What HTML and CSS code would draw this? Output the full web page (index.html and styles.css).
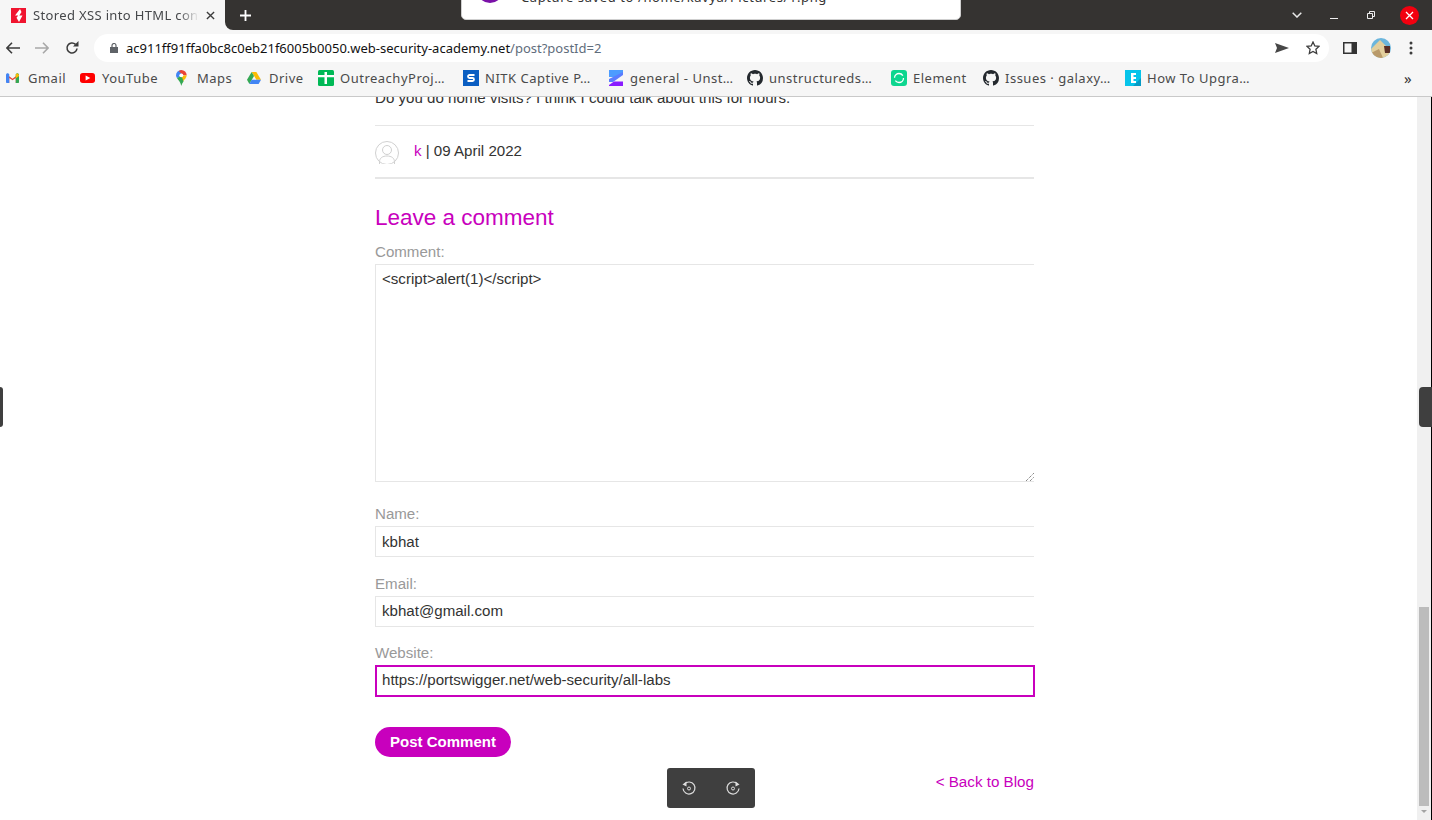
FILE: index.html
```html
<!DOCTYPE html>
<html>
    <head>
        <title>Stored XSS into HTML context</title>
        <meta charset="utf-8">
        <link rel="stylesheet" href="styles.css">
    </head>
    <body>
        <svg class="defs" width="0" height="0">
            <symbol id="github" viewBox="0 0 16 16"><path fill="#24292e" d="M8 0C3.58 0 0 3.58 0 8c0 3.54 2.29 6.53 5.47 7.59.4.07.55-.17.55-.38 0-.19-.01-.82-.01-1.49-2.01.37-2.53-.49-2.69-.94-.09-.23-.48-.94-.82-1.13-.28-.15-.68-.52-.01-.53.63-.01 1.08.58 1.23.82.72 1.21 1.87.87 2.33.66.07-.52.28-.87.51-1.07-1.78-.2-3.64-.89-3.64-3.95 0-.87.31-1.59.82-2.15-.08-.2-.36-1.02.08-2.12 0 0 .67-.21 2.2.82.64-.18 1.32-.27 2-.27.68 0 1.36.09 2 .27 1.53-1.04 2.2-.82 2.2-.82.44 1.1.16 1.92.08 2.12.51.56.82 1.27.82 2.15 0 3.07-1.87 3.75-3.65 3.95.29.25.54.73.54 1.48 0 1.07-.01 1.93-.01 2.2 0 .21.15.46.55.38A8.013 8.013 0 0016 8c0-4.42-3.58-8-8-8z"/></symbol>
        </svg>

        <div class="tabstrip">
            <div class="tab">
                <svg class="favicon" viewBox="0 0 15 15"><rect width="15" height="15" fill="#f0142f"/><path fill="#fff" d="M9 1 4 7.500h3.200L5.500 9.800 8 14l3.500-6.500H8.300L10.500 4z"/></svg>
                <span class="tab-title">Stored XSS into HTML context</span>
                <svg class="tab-close" viewBox="0 0 10 10"><path d="M1 1l8 8M9 1l-8 8" stroke="#3c3c3c" stroke-width="1.500"/></svg>
            </div>
            <div class="strip-rest">
                <svg class="new-tab" viewBox="0 0 12 12"><path d="M6 0v12M0 6h12" stroke="#fff" stroke-width="2"/></svg>
                <div class="window-btns">
                    <svg class="win-chevron" viewBox="0 0 10 6"><path d="M.7.7 5 5l4.300-4.300" fill="none" stroke="#e8e8e8" stroke-width="1.500"/></svg>
                    <svg class="win-min" viewBox="0 0 8 2"><rect width="8" height="1" y="1" fill="#eee"/></svg>
                    <svg class="win-max" viewBox="0 0 8 8"><path d="M.5 2.500h5v5h-5zM2.500 2V.5h5v5H6" fill="none" stroke="#eee"/></svg>
                    <svg class="win-close" viewBox="0 0 19 19"><circle cx="9.500" cy="9.500" r="9.500" fill="#f2000f"/><path d="M6 6l7 7M13 6l-7 7" stroke="#fff" stroke-width="1.300"/></svg>
                </div>
            </div>
        </div>

        <div class="toolbar">
            <svg class="nav-back" viewBox="0 0 14 12"><path d="M6 .7.9 6 6 11.300M1 6h13" fill="none" stroke="#3c3c3c" stroke-width="1.600"/></svg>
            <svg class="nav-fwd" viewBox="0 0 14 12"><path d="M8 .7 13.100 6 8 11.300M13 6H0" fill="none" stroke="#a8a8a8" stroke-width="1.600"/></svg>
            <svg class="nav-reload" viewBox="0 0 14 14"><path d="M12 7.500A5 5 0 1 1 10.500 3.400" fill="none" stroke="#3c3c3c" stroke-width="1.600"/><path d="M13.500 0v5.500H8z" fill="#3c3c3c"/></svg>
            <div class="omnibox">
                <svg class="lock" viewBox="0 0 8 10"><path d="M0 4h8v6H0z" fill="#5f6368"/><path d="M2 4.500V2.500a2 2 0 0 1 4 0v2" fill="none" stroke="#5f6368" stroke-width="1.200"/></svg>
                <span class="url"><b>ac911ff91ffa0bc8c0eb21f6005b0050.web-security-academy.net</b>/post?postId=2</span>
                <svg class="send" viewBox="0 0 14 10"><path d="M0 0 14 5 0 10l2-5z" fill="#474747"/></svg>
                <svg class="star" viewBox="0 0 14 14"><path d="M7 1l1.800 3.900 4.200.5-3.100 2.900.8 4.200L7 10.400l-3.700 2.100.8-4.200L1 5.400l4.200-.5z" fill="none" stroke="#3c3c3c" stroke-width="1.300"/></svg>
            </div>
            <svg class="side-panel" viewBox="0 0 14 12"><path d="M0 0h14v12H0zM1.500 1.500v9h7v-9z" fill="#333" fill-rule="evenodd"/></svg>
            <svg class="profile" viewBox="0 0 20 20"><defs><clipPath id="pf"><circle cx="10" cy="10" r="10"/></clipPath></defs><g clip-path="url(#pf)"><rect width="20" height="20" fill="#6cb6dc"/><path d="M0 11 9 2l9 9v9H0z" fill="#e3cf9c"/><path d="M0 15l8-4 4 9H0z" fill="#b99a6a"/><path d="M13 8h6v7h-5z" fill="#5a2f26"/></g></svg>
            <svg class="menu" viewBox="0 0 4 14"><circle cx="2" cy="2" r="1.500" fill="#3c3c3c"/><circle cx="2" cy="7" r="1.500" fill="#3c3c3c"/><circle cx="2" cy="12" r="1.500" fill="#3c3c3c"/></svg>
        </div>

        <div class="bookmarks">
            <a class="bm">
                <svg class="ic-gmail" viewBox="0 0 16 13" preserveAspectRatio="none"><path d="M1 13V2l7 5.500L15 2v11h-3V6.500L8 9.500 4 6.500V13z" fill="#ea4335"/><path d="M0 2.500C0 .5 2 0 3 .8L4 1.600V13H1.200C.5 13 0 12.500 0 12z" fill="#4285f4"/><path d="M16 2.500c0-2-2-2.500-3-1.700l-1 .8V13h2.800c.7 0 1.200-.5 1.200-1z" fill="#34a853"/><path d="M12 1.600 14 .4 16 2.500V4l-4 3z" fill="#fbbc04"/></svg>
                <span>Gmail</span>
            </a>
            <a class="bm">
                <svg class="ic-yt" viewBox="0 0 16 11" preserveAspectRatio="none"><rect width="16" height="11" rx="3" fill="#f00"/><path d="M6 2.800v5.400L11 5.500z" fill="#fff"/></svg>
                <span>YouTube</span>
            </a>
            <a class="bm">
                <svg class="ic-maps" viewBox="2 0 12 18" preserveAspectRatio="xMinYMid"><path d="M8 0a6 6 0 0 0-6 6c0 1.300.5 2.400 1.200 3.400L8 6z" fill="#4285f4"/><path d="M8 0a6 6 0 0 1 6 6l-4 .2L5 1z" fill="#ea4335"/><path d="M14 6c0 1.200-.5 2.300-1.200 3.200L8 15V6.500z" fill="#fbbc04"/><path d="M3.200 9.400C4.600 11.500 7 13.500 8 18c.4-2 1.500-3.500 2.500-5L8 6z" fill="#34a853"/><circle cx="8" cy="6" r="2.200" fill="#fff"/></svg>
                <span>Maps</span>
            </a>
            <a class="bm">
                <svg class="ic-drive" viewBox="0 0 16 14" preserveAspectRatio="none"><path d="M5.300 0h5.400L16 9h-5.300z" fill="#fbbc04"/><path d="M5.300 0 8 4.600 2.700 14 0 9z" fill="#34a853"/><path d="M2.700 14 5.300 9H16l-2.700 5z" fill="#4285f4"/></svg>
                <span>Drive</span>
            </a>
            <a class="bm">
                <svg viewBox="0 0 16 16"><rect width="16" height="16" rx="1.500" fill="#00b956"/><path d="M0 5h16v2.200H9V14H6.500V7.200H0z" fill="#fff"/><rect x="6.500" y="2" width="2.500" height="3" fill="#fff"/></svg>
                <span>OutreachyProj…</span>
            </a>
            <a class="bm">
                <svg viewBox="0 0 16 16"><rect width="16" height="16" fill="#0a5ec2"/><path d="M11.500 5H6.500a1.500 1.500 0 0 0 0 3h3a1.500 1.500 0 0 1 0 3H4.500" fill="none" stroke="#fff" stroke-width="1.800"/></svg>
                <span>NITK Captive P…</span>
            </a>
            <a class="bm">
                <svg viewBox="0 0 16 16"><path d="M1 0h14v3L7 7H1z" fill="#4c9cff"/><path d="M15 2v3L5 12H1V9z" fill="#5a7cff"/><path d="M6 11.500h9V16H1v-1z" fill="#8a1cff"/></svg>
                <span>general - Unst…</span>
            </a>
            <a class="bm">
                <svg viewBox="0 0 16 16"><use href="#github"/></svg>
                <span>unstructureds…</span>
            </a>
            <a class="bm">
                <svg viewBox="0 0 16 16"><rect width="16" height="16" rx="3" fill="#0dd68f"/><circle cx="8" cy="8" r="4.500" fill="none" stroke="#fff" stroke-width="1.300" stroke-dasharray="11 3.100"/></svg>
                <span>Element</span>
            </a>
            <a class="bm">
                <svg viewBox="0 0 16 16"><use href="#github"/></svg>
                <span>Issues · galaxy…</span>
            </a>
            <a class="bm">
                <svg viewBox="0 0 16 16"><rect width="16" height="16" fill="#06c4ea"/><path d="M8 16 16 8v8z" fill="#069ac4"/><path d="M6 3h5v2H8.500v2H11v2H8.500v2H11v2H6z" fill="#fff"/></svg>
                <span>How To Upgra…</span>
            </a>
            <span class="bm-more">»</span>
        </div>

        <div class="viewport">
            <div class="page">
                <div class="post-comment">
                    <p class="comment-text">Do you do home visits? I think I could talk about this for hours.</p>
                    <div class="comment-meta">
                        <svg class="avatar" viewBox="0 0 24 24"><defs><clipPath id="av"><rect width="24" height="23"/></clipPath></defs><g clip-path="url(#av)" fill="none" stroke="#d0d0d0"><circle cx="12" cy="12" r="11.500"/><circle cx="12" cy="9" r="4.500"/><path d="M4.500 24v-3c0-4 3-6 7.500-6s7.500 2 7.500 6v3"/></g></svg>
                        <span class="meta-text"><a class="link">k</a> | 09 April 2022</span>
                    </div>
                </div>
                <h2>Leave a comment</h2>
                <form class="comment-form" onsubmit="return false;">
                    <label class="field-label">Comment:</label>
                    <div class="textarea"><span>&lt;script&gt;alert(1)&lt;/script&gt;</span>
                        <svg class="grip" viewBox="0 0 8 8"><path d="M0 8l8-8M4 8l4-4" stroke="#555" stroke-dasharray="1 1"/></svg>
                    </div>
                    <label class="field-label name-label">Name:</label>
                    <div class="input">kbhat</div>
                    <label class="field-label email-label">Email:</label>
                    <div class="input email-input">kbhat@gmail.com</div>
                    <label class="field-label website-label">Website:</label>
                    <div class="input focused">https://portswigger.net/web-security/all-labs</div>
                    <button class="post-btn" type="submit">Post Comment</button>
                </form>
                <div class="back-row"><a class="link">&lt; Back to Blog</a></div>
            </div>
            <div class="scrollbar">
                <svg class="scroll-arrow" viewBox="0 0 6 3"><path d="M0 0h6L3 3z" fill="#a3a3a3"/></svg>
                <div class="scroll-thumb"></div>
            </div>
        </div>

        <!-- overlays from the screen recorder -->
        <div class="toast">
            <span class="toast-dot"></span>
            <span class="toast-text">Capture saved to /home/kavya/Pictures/1.png</span>
        </div>
        <div class="handle handle-left"></div>
        <div class="handle handle-right"></div>
        <div class="rotate-bar">
            <svg viewBox="0 0 16 16"><path d="M3.500 4A6 6 0 1 1 2 8.500" fill="none" stroke="#ddd" stroke-width="1.200"/><path d="M1.500 4.500 5.500 1.500v5z" fill="#ddd"/><circle cx="8" cy="8.500" r="1.500" fill="none" stroke="#ddd"/></svg>
            <svg viewBox="0 0 16 16"><path d="M12.500 4A6 6 0 1 0 14 8.500" fill="none" stroke="#ddd" stroke-width="1.200"/><path d="M14.500 4.500 10.500 1.500v5z" fill="#ddd"/><circle cx="8" cy="8.500" r="1.500" fill="none" stroke="#ddd"/></svg>
        </div>
    </body>
</html>
```

FILE: styles.css
```css
html, body {
    margin: 0;
    height: 820px;
    overflow: hidden;
}
body {
    display: flex;
    flex-direction: column;
    font-family: "Liberation Sans", sans-serif;
    background-color: #fff;
    color: #333332;
}
.defs {
    position: absolute;
}

/* browser chrome */
.tabstrip {
    display: flex;
    height: 30px;
    background-color: #f6f6f6;
}
.tab {
    display: flex;
    align-items: center;
    width: 225px;
    padding-left: 11px;
    box-sizing: border-box;
}
.strip-rest {
    flex: 1;
    display: flex;
    align-items: center;
    background-color: #353331;
    border-bottom-left-radius: 8px;
}
.favicon {
    width: 15px;
    height: 15px;
    margin-right: 7px;
}
.tab-title {
    width: 166px;
    overflow: hidden;
    white-space: nowrap;
    font-family: "Noto Sans", sans-serif;
    font-size: 13px;
    letter-spacing: 0.35px;
    color: #45474a;
    -webkit-mask-image: linear-gradient(to right, #000 88%, transparent);
    mask-image: linear-gradient(to right, #000 88%, transparent);
}
.tab-close {
    width: 9px;
    height: 9px;
    margin-left: 7px;
}
.new-tab {
    width: 11px;
    height: 11px;
    margin-left: 15px;
}
.window-btns {
    display: flex;
    align-items: center;
    margin-left: auto;
}
.win-chevron {
    width: 10px;
    height: 6px;
    margin-right: 28px;
}
.win-min {
    width: 8px;
    height: 2px;
    margin-top: 5px;
    margin-right: 29px;
}
.win-max {
    width: 8px;
    height: 8px;
    margin-right: 25px;
}
.win-close {
    width: 19px;
    height: 19px;
    margin-right: 13px;
}
.toolbar {
    display: flex;
    align-items: center;
    height: 32px;
    padding-top: 4px;
    box-sizing: border-box;
    background-color: #f6f6f6;
}
.nav-back {
    width: 14px;
    height: 12px;
    margin-left: 6px;
}
.nav-fwd {
    width: 14px;
    height: 12px;
    margin-left: 15px;
}
.nav-reload {
    width: 14px;
    height: 14px;
    margin-left: 16px;
}
.omnibox {
    display: flex;
    align-items: center;
    width: 1235px;
    height: 28px;
    margin-left: 15px;
    padding-left: 16px;
    box-sizing: border-box;
    background-color: #fff;
    border-radius: 14px;
}
.lock {
    width: 8px;
    height: 10px;
}
.url {
    margin-left: 8px;
    margin-bottom: 1px;
    white-space: nowrap;
    font-family: "Noto Sans", sans-serif;
    font-size: 13px;
    color: #5f6d7c;
}
.url b {
    font-weight: normal;
    color: #111;
}
.send {
    width: 14px;
    height: 10px;
    margin-left: auto;
}
.star {
    width: 14px;
    height: 14px;
    margin-left: 17px;
    margin-right: 9px;
}
.side-panel {
    width: 14px;
    height: 12px;
    margin-left: 14px;
}
.profile {
    width: 20px;
    height: 20px;
    margin-left: 14px;
}
.menu {
    width: 4px;
    height: 14px;
    margin-left: 18px;
}
.bookmarks {
    display: grid;
    grid-template-columns: 74px 96px 71px 71px 145px 145px 139px 144px 92px 142px 279px auto;
    align-items: center;
    height: 35px;
    padding-left: 6px;
    padding-bottom: 2px;
    box-sizing: border-box;
    background-color: #f6f6f6;
    border-bottom: 1px solid #c9c9c9;
}
.bm {
    display: flex;
    align-items: center;
    gap: 6px;
    white-space: nowrap;
    font-family: "Noto Sans", sans-serif;
    font-size: 13px;
    letter-spacing: 0.5px;
    color: #4a4a4a;
}
.bm svg {
    width: 16px;
    height: 16px;
}
.bm .ic-gmail {
    width: 13px;
    height: 10px;
    margin-right: 3px;
}
.bm .ic-yt {
    width: 15px;
    height: 10px;
    margin-right: 1px;
}
.bm .ic-maps {
    width: 16px;
    height: 16px;
    margin-right: -1px;
}
.bm .ic-drive {
    width: 14px;
    height: 12px;
    margin-right: 2px;
}
.bm-more {
    font-family: "Noto Sans", sans-serif;
    font-size: 15px;
    color: #333;
}

/* page */
.viewport {
    flex: 1;
    display: flex;
    overflow: hidden;
    border-right: 1px solid #000;
}
.page {
    flex: 1;
    padding-left: 375px;
    margin-top: -11px;
    font-size: 15.1px;
    line-height: 23px;
}
.post-comment {
    width: 659px;
}
.comment-text {
    margin: 0;
    padding-bottom: 16px;
    border-bottom: 1px solid #e6e6e6;
}
.comment-meta {
    display: flex;
    align-items: center;
    gap: 15px;
    height: 51px;
    border-bottom: 2px solid #e6e6e6;
}
.meta-text {
    margin-bottom: 2px;
}
.avatar {
    width: 24px;
    height: 24px;
    margin-top: 2px;
}
.link {
    color: #c800bd;
}
h2 {
    margin: 25px 0 0;
    font-size: 22.5px;
    font-weight: normal;
    line-height: 28px;
    color: #c800bd;
}
.comment-form {
    display: flex;
    flex-direction: column;
    width: 659px;
}
.field-label {
    margin-top: 10px;
    line-height: 20px;
    color: #999;
}
.name-label {
    margin-top: 22px;
}
.email-label {
    margin-top: 17px;
}
.website-label {
    margin-top: 16px;
}
.textarea, .input {
    box-sizing: border-box;
    padding-left: 6px;
    border: 1px solid #e6e6e6;
    border-right: 0;
    color: #333332;
}
.textarea {
    position: relative;
    height: 218px;
    margin-top: 2px;
    padding-top: 2px;
}
.grip {
    position: absolute;
    right: 0;
    bottom: 0;
    width: 8px;
    height: 8px;
}
.input {
    height: 31px;
    margin-top: 2px;
    line-height: 29px;
}
.input.email-input {
    line-height: 27px;
}
.input.focused {
    height: 32px;
    margin-right: -1px;
    padding-left: 5px;
    border: 2px solid #c800bd;
    line-height: 25px;
}
.post-btn {
    align-self: flex-start;
    width: 136px;
    height: 30px;
    margin-top: 30px;
    padding: 0 0 2px;
    border: 0;
    border-radius: 15px;
    background-color: #c800bd;
    color: #fff;
    font-family: "Liberation Sans", sans-serif;
    font-size: 15px;
    font-weight: bold;
}
.back-row {
    width: 659px;
    margin-top: 13px;
    text-align: right;
    font-size: 15.2px;
}
.scrollbar {
    display: flex;
    flex-direction: column-reverse;
    align-items: center;
    flex: 0 0 14px;
    background-color: #f0f0f0;
}
.scroll-arrow {
    width: 6px;
    height: 3px;
    margin-top: 4px;
    margin-bottom: 7px;
}
.scroll-thumb {
    width: 10px;
    height: 199px;
    background-color: #bcbcbc;
}

/* overlays */
.toast {
    position: absolute;
    left: 461px;
    top: -40px;
    width: 500px;
    height: 60px;
    box-sizing: border-box;
    background-color: #fff;
    border: 1px solid #cfcfcf;
    border-radius: 5px;
    overflow: hidden;
}
.toast-dot {
    position: absolute;
    left: 16px;
    top: 21px;
    width: 24px;
    height: 21px;
    border-radius: 50%;
    background-color: #7a11a8;
}
.toast-text {
    position: absolute;
    left: 59px;
    top: 27px;
    white-space: nowrap;
    font-family: "Noto Sans", sans-serif;
    font-size: 13px;
    letter-spacing: 0.6px;
    line-height: 18px;
    color: #333;
}
.handle {
    position: absolute;
    top: 387px;
    height: 40px;
    background-color: #3f3f3f;
}
.handle-left {
    left: 0;
    width: 3px;
    border-radius: 0 3px 3px 0;
}
.handle-right {
    right: 0;
    width: 13px;
    border-radius: 4px 0 0 4px;
}
.rotate-bar {
    position: absolute;
    left: 667px;
    top: 768px;
    display: flex;
    align-items: center;
    justify-content: center;
    gap: 28px;
    width: 88px;
    height: 40px;
    background-color: #3f3f3f;
    border-radius: 3px;
}
.rotate-bar svg {
    width: 16px;
    height: 16px;
}
```
